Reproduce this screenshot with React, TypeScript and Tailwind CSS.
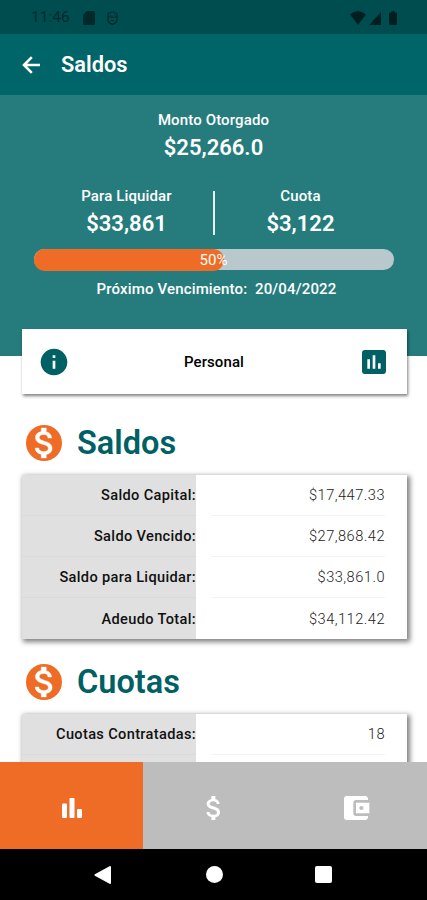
import type { ReactNode } from "react";
import { MdInfo, MdAssessment, MdAttachMoney, MdAccountBalanceWallet } from "react-icons/md";

function CoinIcon() {
  return (
    <svg width="36" height="36" viewBox="0 0 36 36" className="shrink-0">
      <circle cx="18" cy="18" r="18" fill="#ee6c25" />
      <path
        transform="translate(-1.4 -2) scale(1.667)"
        fill="#fff"
        stroke="#fff"
        strokeWidth="0.25"
        d="M11.8 10.9c-2.27-.59-3-1.2-3-2.15 0-1.09 1.01-1.85 2.7-1.85 1.78 0 2.44.85 2.5 2.1h2.21c-.07-1.72-1.12-3.3-3.21-3.81V3h-3v2.16c-1.94.42-3.5 1.68-3.5 3.61 0 2.31 1.91 3.46 4.7 4.13 2.5.6 3 1.48 3 2.41 0 .69-.49 1.79-2.7 1.79-2.06 0-2.87-.92-2.98-2.1h-2.2c.12 2.19 1.76 3.42 3.68 3.83V21h3v-2.15c1.95-.37 3.5-1.5 3.5-3.55 0-2.84-2.43-3.81-4.7-4.4z"
      />
    </svg>
  );
}

function Heading({ children }: { children: ReactNode }) {
  return (
    <div className="flex h-[36px] items-center gap-[15px] pl-[26px]">
      <CoinIcon />
      <h2 className="text-[32.5px] leading-9 font-semibold text-[#006064]">{children}</h2>
    </div>
  );
}

function Table({ rows }: { rows: [string, string][] }) {
  return (
    <div className="mr-[20px] ml-[22px] bg-white shadow-[2px_2px_5px_1px_rgba(0,0,0,0.5)]">
      {rows.map(([label, value], i) => (
        <div key={label} className="flex h-[41px] text-[14.6px]">
          <div
            className={
              "flex w-[174px] items-center justify-end pt-[2px] font-medium tracking-[0.34px] whitespace-nowrap text-[#111] bg-[#e0e0e0] " +
              (i < rows.length - 1 ? "border-b border-[#dadada]" : "")
            }
          >
            {label}
          </div>
          <div
            className={
              "mr-[22px] ml-[15px] flex flex-1 items-center justify-end pt-[2px] font-light tracking-[0.5px] text-[#222] " +
              (i < rows.length - 1 ? "border-b border-[#f3f3f3]" : "")
            }
          >
            {value}
          </div>
        </div>
      ))}
    </div>
  );
}

function Amount({ label, value }: { label: string; value: string }) {
  return (
    <div className="flex w-[172px] flex-col items-center">
      <span className="text-[15px] leading-5 font-medium tracking-[0.13px]">{label}</span>
      <span className="mt-[3px] mb-px text-[22px] leading-[30px] font-semibold">{value}</span>
    </div>
  );
}

export default function App() {
  return (
    <div className="flex h-[900px] w-[427px] flex-col overflow-hidden bg-white font-['Roboto','Liberation_Sans',sans-serif]">
      <div className="flex h-[34px] shrink-0 items-center bg-[#004d50] pt-[2px] pl-[31px] text-[#00292b]">
        <span className="text-[15.5px]">11:46</span>
        <svg className="ml-[13px]" width="12" height="14" viewBox="0 0 12 14" fill="currentColor">
          <path d="M4 0h6.500q1.500 0 1.500 1.500v11q0 1.500-1.500 1.500h-9Q0 14 0 12.500V4z" />
        </svg>
        <svg className="ml-[12px]" width="11" height="14" viewBox="0 0 11 14" fill="none" stroke="currentColor" strokeWidth="1.2">
          <path d="M1 2.500 5.500.8 10 2.500v7Q9 12.500 5.500 13.300 2 12.500 1 9.500zM1 6h9M4 9.500h3M3.500 3.500v1M7.500 3.500v1" />
        </svg>
        <svg className="ml-auto" width="16" height="14" viewBox="0 0 16 14" fill="#001f20">
          <path d="M0 3.500Q8-3.500 16 3.500L8 14z" />
        </svg>
        <svg className="ml-[3px]" width="12" height="13" viewBox="0 0 12 13" fill="#001f20">
          <path d="M12 0v13H0z" />
        </svg>
        <svg className="mr-[30px] ml-[8px]" width="8" height="14" viewBox="0 0 8 14" fill="#001f20">
          <path d="M2.500 0h3v1.500H7q1 0 1 1V13q0 1-1 1H1q-1 0-1-1V2.500q0-1 1-1h1.500z" />
        </svg>
      </div>
      <header className="flex h-[61px] shrink-0 items-center gap-[21px] bg-[#006568] pl-[22px] text-white">
        <svg width="18" height="18" viewBox="0 0 18 18" fill="none" stroke="currentColor" strokeWidth="2.6">
          <path d="M18 9H2.500M9.800 1.200 2 9l7.800 7.800" />
        </svg>
        <h1 className="text-[21.8px] leading-8 font-semibold">Saldos</h1>
      </header>
      <section className="flex h-[261px] shrink-0 flex-col items-center bg-[#267c7d] pt-[15px] text-white">
        <Amount label="Monto Otorgado" value="$25,266.0" />
        <div className="mt-[22px] flex items-center">
          <Amount label="Para Liquidar" value="$33,861" />
          <div className="h-[44px] w-[2px] bg-[#e6f0f0]" />
          <Amount label="Cuota" value="$3,122" />
        </div>
        <div className="mt-[9px] grid h-[21px] w-[360px] rounded-full bg-[#b9c8cc]">
          <div className="col-start-1 row-start-1 w-[190px] rounded-full bg-[#ee6c25]" />
          <span className="col-start-1 row-start-1 text-center text-[15px] leading-[22px]">50%</span>
        </div>
        <p className="mt-[9px] pl-[6px] text-[15px] leading-5 font-medium tracking-[0.15px] whitespace-pre">Próximo Vencimiento:  20/04/2022</p>
      </section>
      <div className="relative mt-[-27px] mr-[20px] ml-[22px] flex h-[65px] shrink-0 items-center justify-between bg-white pr-[17px] pl-[16px] shadow-[1px_2px_3px_rgba(0,0,0,0.5)]">
        <MdInfo size={32} color="#006064" />
        <span className="pt-px text-[15px] font-medium tracking-[0.1px] text-black">Personal</span>
        <MdAssessment size={32} color="#006064" />
      </div>
      <main className="flex min-h-0 flex-1 flex-col overflow-hidden pt-[31px]">
        <Heading>Saldos</Heading>
        <div className="mt-[14px]">
          <Table
            rows={[
              ["Saldo Capital:", "$17,447.33"],
              ["Saldo Vencido:", "$27,868.42"],
              ["Saldo para Liquidar:", "$33,861.0"],
              ["Adeudo Total:", "$34,112.42"],
            ]}
          />
        </div>
        <div className="mt-[25px]">
          <Heading>Cuotas</Heading>
        </div>
        <div className="mt-[14px]">
          <Table
            rows={[
              ["Cuotas Contratadas:", "18"],
              ["", ""],
            ]}
          />
        </div>
      </main>
      <nav className="grid h-[87px] shrink-0 grid-cols-[143px_142px_142px] bg-[#bdbdbd] text-white">
        <div className="flex items-center justify-center bg-[#ee6c25] pt-[5px]">
          <svg width="20" height="20" viewBox="0 0 20 20" fill="currentColor">
            <rect y="5.500" width="5" height="14.500" rx="1" />
            <rect x="7.500" width="5" height="20" rx="1" />
            <rect x="15" y="11" width="5" height="9" rx="1" />
          </svg>
        </div>
        <div className="flex items-center justify-center pt-[5px]">
          <MdAttachMoney size={32} />
        </div>
        <div className="flex items-center justify-center pt-[5px]">
          <MdAccountBalanceWallet size={32} />
        </div>
      </nav>
      <footer className="flex h-[51px] shrink-0 items-center bg-black pl-[94px]">
        <svg width="17" height="18" viewBox="0 0 17 18" fill="#fff">
          <path d="M16 0q1 0 1 1v16q0 1-1 1L.8 9.800Q0 9 .8 8.200z" />
        </svg>
        <div className="ml-[95px] h-[17px] w-[17px] rounded-full bg-white" />
        <div className="ml-[92px] h-[17px] w-[17px] rounded-[2px] bg-white" />
      </footer>
    </div>
  );
}
